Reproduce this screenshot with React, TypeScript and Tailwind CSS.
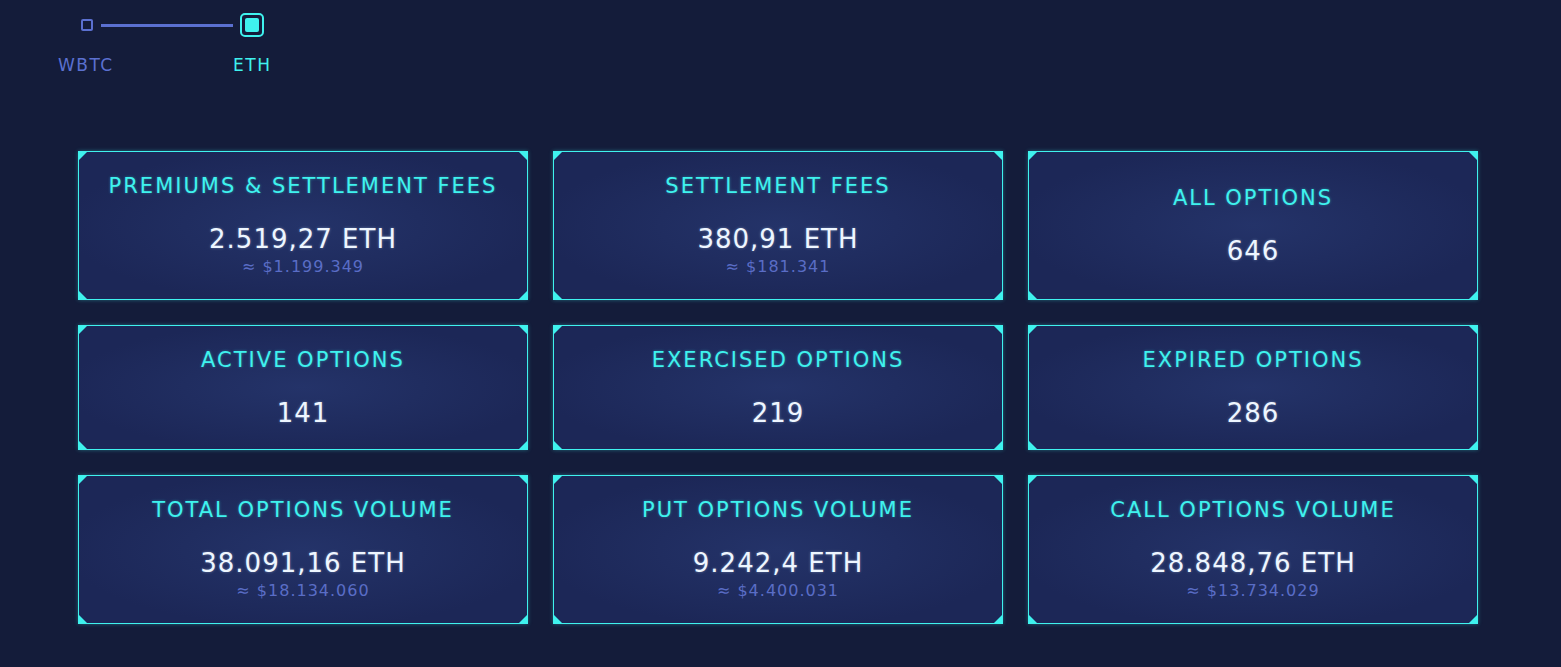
import React from 'react'

interface Stat {
  title: string
  value: string
  usd?: string
  tall?: boolean
}

const stats: Stat[] = [
  { title: 'Premiums & Settlement Fees', value: '2.519,27 ETH', usd: '≈ $1.199.349', tall: true },
  { title: 'Settlement Fees', value: '380,91 ETH', usd: '≈ $181.341', tall: true },
  { title: 'All Options', value: '646', tall: true },
  { title: 'Active Options', value: '141' },
  { title: 'Exercised Options', value: '219' },
  { title: 'Expired Options', value: '286' },
  { title: 'Total Options Volume', value: '38.091,16 ETH', usd: '≈ $18.134.060', tall: true },
  { title: 'Put Options Volume', value: '9.242,4 ETH', usd: '≈ $4.400.031', tall: true },
  { title: 'Call Options Volume', value: '28.848,76 ETH', usd: '≈ $13.734.029', tall: true },
]

const font = { fontFamily: '"DejaVu Sans", "Liberation Sans", sans-serif' }

const StatCard: React.FC<{ stat: Stat }> = ({ stat }) => (
  <div
    className={`relative flex flex-col items-center justify-center border border-[#3ff2ee] bg-[radial-gradient(ellipse_at_center,#243369_0%,#1c2757_75%)] shadow-[0_0_4px_rgba(63,242,238,0.35)] ${
      stat.tall ? 'h-[149px]' : 'h-[125px]'
    }`}
  >
    {/* corner marks */}
    <span className="absolute left-0 top-0 h-[8px] w-[8px] bg-[#3ff2ee] [clip-path:polygon(0_0,100%_0,0_100%)]" />
    <span className="absolute right-0 top-0 h-[8px] w-[8px] bg-[#3ff2ee] [clip-path:polygon(0_0,100%_0,100%_100%)]" />
    <span className="absolute bottom-0 left-0 h-[8px] w-[8px] bg-[#3ff2ee] [clip-path:polygon(0_0,0_100%,100%_100%)]" />
    <span className="absolute bottom-0 right-0 h-[8px] w-[8px] bg-[#3ff2ee] [clip-path:polygon(100%_0,100%_100%,0_100%)]" />

    <div className="text-[21px] uppercase leading-none tracking-[2px] text-[#3ff2ee] [text-shadow:0_0_3px_rgba(63,242,238,0.4)]">
      {stat.title}
    </div>
    <div className="mt-[29px] text-[26px] leading-none tracking-[1px] text-[#eef6ff] [text-shadow:0_0_3px_rgba(200,230,255,0.4)]">
      {stat.value}
    </div>
    {stat.usd && (
      <div className="mt-[7px] text-[16px] leading-none tracking-[1px] text-[#5a6dc6]">{stat.usd}</div>
    )}
  </div>
)

export default function App() {
  return (
    <div className="min-h-[667px] w-full bg-[#141c3a]" style={font}>
      {/* asset stepper */}
      <div className="pl-[58px] pt-[13px]">
        <div className="flex items-center pl-[23px]">
          <div className="h-[12px] w-[12px] rounded-[2px] border-2 border-[#5b70d0]" />
          <div className="ml-[8px] h-[3px] w-[132px] bg-[#5b70d0]" />
          <div className="ml-[7px] flex h-[24px] w-[24px] items-center justify-center rounded-[5px] border-2 border-[#3ff2ee]">
            <div className="h-[14px] w-[14px] rounded-[2px] bg-[#3ff2ee]" />
          </div>
        </div>
        <div className="mt-[20px] flex items-center text-[17px] leading-none tracking-[1.5px]">
          <span className="w-[175px] text-[#5b70d0]">WBTC</span>
          <span className="text-[#3ff2ee]">ETH</span>
        </div>
      </div>

      <div className="ml-[78px] mt-[77px] grid w-[1400px] grid-cols-3 gap-[25px]">
        {stats.map((s) => (
          <StatCard key={s.title} stat={s} />
        ))}
      </div>
    </div>
  )
}
